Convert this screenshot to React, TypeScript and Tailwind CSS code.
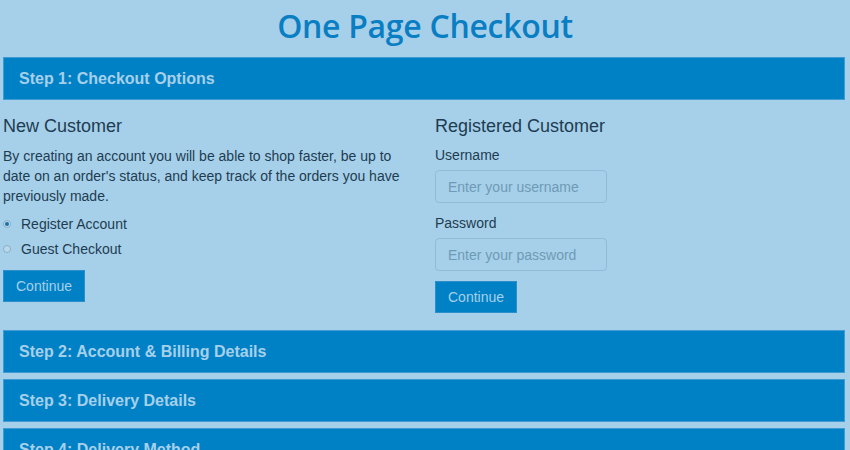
import { useState } from "react";

const STEPS_AFTER = [
  "Step 2: Account & Billing Details",
  "Step 3: Delivery Details",
  "Step 4: Delivery Method",
];

function StepBar({ title }: { title: string }) {
  return (
    <div className="flex h-[43px] items-center border border-[#3f9cd2] bg-[#0181c5] px-[15px] text-[16px] font-bold text-[#a6d0ea]">
      {title}
    </div>
  );
}

function Radio({
  checked,
  label,
  onClick,
}: {
  checked: boolean;
  label: string;
  onClick: () => void;
}) {
  return (
    <label
      className="flex h-5 cursor-pointer items-center gap-[10px] text-[14px] text-[#1e3c51]"
      onClick={onClick}
    >
      <span className="flex h-[8px] w-[8px] items-center justify-center rounded-full border border-[#86afc9] bg-[#bcd9ec]">
        {checked && <span className="h-[4px] w-[4px] rounded-full bg-[#1a6fa8]" />}
      </span>
      {label}
    </label>
  );
}

function ContinueButton() {
  return (
    <button
      type="button"
      className="h-[32px] w-fit border border-[#2b8fcb] bg-[#0181c5] px-[12px] text-[14px] text-[#a6d0ea]"
    >
      Continue
    </button>
  );
}

export default function App() {
  const [account, setAccount] = useState<"register" | "guest">("register");

  return (
    <div className="h-[450px] w-[850px] overflow-hidden bg-[#a6d0ea] font-['Liberation_Sans',Arial,sans-serif]">
      <div className="flex h-[57px] items-center justify-center pb-[6px] font-['Open_Sans',sans-serif] text-[32px] font-semibold tracking-[-0.3px] text-[#0a7ec2]">
        One Page Checkout
      </div>

      <div className="flex flex-col pl-[3px] pr-[5px]">
        <StepBar title="Step 1: Checkout Options" />

        <div className="mt-[16px] grid grid-cols-[410px_172px] gap-x-[22px]">
          <div className="flex flex-col">
            <h2 className="text-[18px] leading-5 text-[#1e3c51]">New Customer</h2>
            <p className="mt-[10px] text-[14px] leading-5 text-[#1e3c51]">
              By creating an account you will be able to shop faster, be up to
              date on an order's status, and keep track of the orders you have
              previously made.
            </p>
            <div className="mt-[8px] flex flex-col gap-[5px]">
              <Radio
                checked={account === "register"}
                label="Register Account"
                onClick={() => setAccount("register")}
              />
              <Radio
                checked={account === "guest"}
                label="Guest Checkout"
                onClick={() => setAccount("guest")}
              />
            </div>
            <div className="mt-[11px]">
              <ContinueButton />
            </div>
          </div>

          <div className="flex flex-col">
            <h2 className="text-[18px] leading-5 text-[#1e3c51]">Registered Customer</h2>
            <label className="mt-[9px] text-[14px] leading-5 text-[#1e3c51]">Username</label>
            <input
              className="mt-[5px] h-[33px] rounded-[4px] border border-[#8fbcd8] bg-transparent px-[12px] text-[14px] text-[#1e3c51] outline-none placeholder:text-[#6f9ab5]"
              placeholder="Enter your username"
            />
            <label className="mt-[10px] text-[14px] leading-5 text-[#1e3c51]">Password</label>
            <input
              type="password"
              className="mt-[5px] h-[33px] rounded-[4px] border border-[#8fbcd8] bg-transparent px-[12px] text-[14px] text-[#1e3c51] outline-none placeholder:text-[#6f9ab5]"
              placeholder="Enter your password"
            />
            <div className="mt-[10px]">
              <ContinueButton />
            </div>
          </div>
        </div>

        <div className="mt-[17px] flex flex-col gap-[6px]">
          {STEPS_AFTER.map((s) => (
            <StepBar key={s} title={s} />
          ))}
        </div>
      </div>
    </div>
  );
}
